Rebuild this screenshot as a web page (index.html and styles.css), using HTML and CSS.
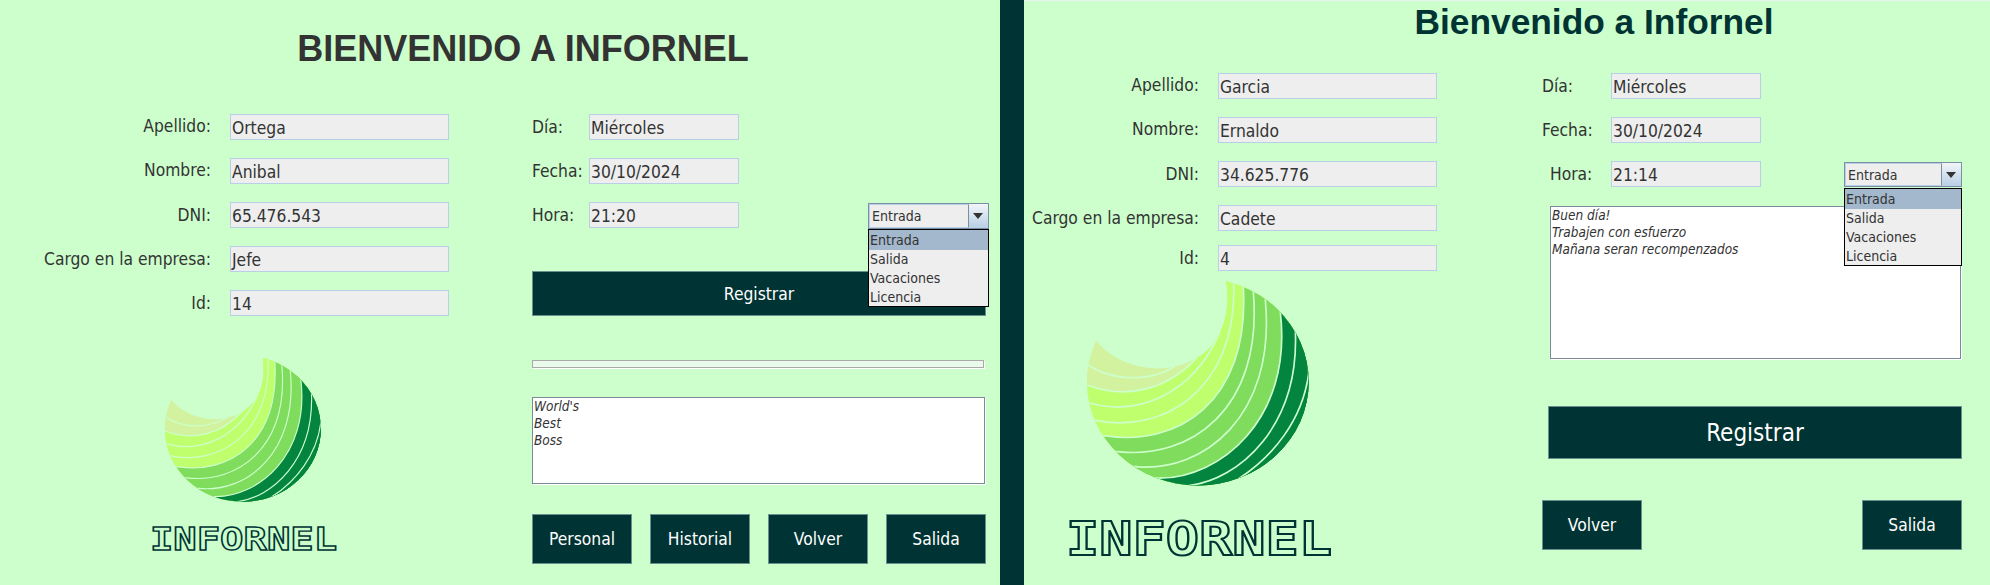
FILE: index.html
```html
<!DOCTYPE html>
<html>

<head>
    <meta charset="utf-8">
    <title>Infornel</title>
    <link rel="stylesheet" href="styles.css">
</head>

<body>
    <svg class="defs" width="0" height="0">
        <defs>
            <clipPath id="disc-edge">
                <ellipse cx="445" cy="335" rx="333" ry="312" />
            </clipPath>
            <clipPath id="disc-cut">
                <path d="M140 213 C205 290 310 305 375 290 C400 285 420 277 440 265 C495 235 550 160 530 30 L900 0 L900 700 L0 700 L0 213 Z" />
            </clipPath>
            <symbol id="disc" viewBox="100 30 700 630">
                <g clip-path="url(#disc-edge)">
                    <g clip-path="url(#disc-cut)" class="bands">
                        <path class="pale" d="M0 0 L900 0 L900 700 L0 700 Z" />
                        <path class="pale" d="M0 285 L115 285 C190 335 300 335 375 290 L375 0 L900 0 L900 700 L0 700 Z" />
                        <path class="lime" d="M0 345 L113 345 C230 390 350 360 440 265 L440 0 L900 0 L900 700 L0 700 Z" />
                        <path class="lime" d="M0 400 L123 400 C270 440 430 370 510 190 L510 0 L900 0 L900 700 L0 700 Z" />
                        <path class="lime" d="M0 452 L143 452 C330 490 560 370 553 47 L553 0 L900 0 L900 700 L0 700 Z" />
                        <path class="green" d="M0 498 L170 498 C380 530 600 400 582 57 L582 0 L900 0 L900 700 L0 700 Z" />
                        <path class="green" d="M0 545 L205 545 C420 570 640 420 612 70 L612 0 L900 0 L900 700 L0 700 Z" />
                        <path class="green" d="M0 590 L258 590 C460 610 680 440 648 93 L648 0 L900 0 L900 700 L0 700 Z" />
                        <path class="dark" d="M0 625 L330 625 C510 625 730 450 693 128 L693 0 L900 0 L900 700 L0 700 Z" />
                        <path class="dark" d="M415 700 L415 648 C570 630 750 470 738 183 L738 0 L900 0 L900 700 Z" />
                        <path class="dark" d="M570 700 L570 625 C670 560 760 450 778 310 L778 0 L900 0 L900 700 Z" />
                    </g>
                </g>
            </symbol>
        </defs>
    </svg>

    <div class="screen">
        <div class="panel panel-left">
            <h1 class="title">BIENVENIDO A INFORNEL</h1>
            <div class="columns">
                <div class="col-a">
                    <div class="form">
                        <div class="row raised"><span class="label">Apellido:</span><div class="field">Ortega</div></div>
                        <div class="row raised"><span class="label">Nombre:</span><div class="field">Anibal</div></div>
                        <div class="row"><span class="label">DNI:</span><div class="field">65.476.543</div></div>
                        <div class="row"><span class="label">Cargo en la empresa:</span><div class="field">Jefe</div></div>
                        <div class="row"><span class="label">Id:</span><div class="field">14</div></div>
                    </div>
                    <svg class="disc"><use href="#disc" /></svg>
                    <svg class="wordmark" viewBox="0 0 260 34"><text x="-3" y="34" textLength="266" lengthAdjust="spacingAndGlyphs">INFORNEL</text></svg>
                </div>
                <div class="col-b">
                    <div class="date-rows">
                        <div class="date-row"><span class="date-label">Día:</span><div class="field">Miércoles</div></div>
                        <div class="date-row"><span class="date-label">Fecha:</span><div class="field">30/10/2024</div></div>
                        <div class="date-row">
                            <span class="date-label">Hora:</span><div class="field">21:20</div>
                            <div class="combo">
                                <div class="combo-value">Entrada</div>
                                <div class="combo-arrow"></div>
                                <div class="combo-list">
                                    <div class="combo-item selected">Entrada</div>
                                    <div class="combo-item">Salida</div>
                                    <div class="combo-item">Vacaciones</div>
                                    <div class="combo-item">Licencia</div>
                                </div>
                            </div>
                        </div>
                    </div>
                    <div class="btn register">Registrar</div>
                    <div class="progress"></div>
                    <div class="notes">World's<br>Best<br>Boss</div>
                    <div class="actions">
                        <div class="btn small">Personal</div>
                        <div class="btn small">Historial</div>
                        <div class="btn small">Volver</div>
                        <div class="btn small">Salida</div>
                    </div>
                </div>
            </div>
        </div>

        <div class="divider"></div>

        <div class="panel panel-right">
            <h1 class="title">Bienvenido a Infornel</h1>
            <div class="columns">
                <div class="col-a">
                    <div class="form">
                        <div class="row raised"><span class="label">Apellido:</span><div class="field">Garcia</div></div>
                        <div class="row raised"><span class="label">Nombre:</span><div class="field">Ernaldo</div></div>
                        <div class="row"><span class="label">DNI:</span><div class="field">34.625.776</div></div>
                        <div class="row"><span class="label">Cargo en la empresa:</span><div class="field">Cadete</div></div>
                        <div class="row close"><span class="label">Id:</span><div class="field">4</div></div>
                    </div>
                    <svg class="disc"><use href="#disc" /></svg>
                    <svg class="wordmark" viewBox="0 0 260 34"><text x="-3" y="34" textLength="266" lengthAdjust="spacingAndGlyphs">INFORNEL</text></svg>
                </div>
                <div class="col-b">
                    <div class="date-rows">
                        <div class="date-row"><span class="date-label">Día:</span><div class="field">Miércoles</div></div>
                        <div class="date-row"><span class="date-label">Fecha:</span><div class="field">30/10/2024</div></div>
                        <div class="date-row">
                            <span class="date-label indented">Hora:</span><div class="field">21:14</div>
                            <div class="combo">
                                <div class="combo-value">Entrada</div>
                                <div class="combo-arrow"></div>
                                <div class="combo-list">
                                    <div class="combo-item selected">Entrada</div>
                                    <div class="combo-item">Salida</div>
                                    <div class="combo-item">Vacaciones</div>
                                    <div class="combo-item">Licencia</div>
                                </div>
                            </div>
                        </div>
                    </div>
                    <div class="notes">Buen día!<br>Trabajen con esfuerzo<br>Mañana seran recompenzados</div>
                    <div class="btn register">Registrar</div>
                    <div class="actions">
                        <div class="btn small">Volver</div>
                        <div class="btn small">Salida</div>
                    </div>
                </div>
            </div>
        </div>
    </div>
</body>

</html>
```

FILE: styles.css
```css
* {
    margin: 0;
    padding: 0;
    box-sizing: border-box;
}

body {
    width: 1990px;
    height: 585px;
    overflow: hidden;
    background-color: #ccffcc;
    color: #333333;
    font-family: "DejaVu Sans Condensed", "DejaVu Sans", "Noto Sans", sans-serif;
    font-size: 17.3px;
}

.defs {
    position: absolute;
}

.screen {
    display: flex;
    height: 585px;
}

.panel {
    height: 585px;
}

.panel-left {
    width: 1000px;
    padding-top: 29px;
}

.divider {
    width: 24px;
    background-color: #003333;
}

.panel-right {
    width: 966px;
    border-top: 1px solid #e8f4ee;
    padding-top: 1px;
}

.title {
    height: 40px;
    line-height: 40px;
    font-family: "Liberation Sans", Arial, sans-serif;
    font-size: 36px;
    font-weight: bold;
    text-align: center;
}

.panel-left .title {
    padding-left: 46px;
    margin-bottom: 45px;
}

.panel-right .title {
    padding-left: 174px;
    margin-bottom: 31px;
    font-size: 35.3px;
    color: #003333;
}

.columns {
    display: flex;
}

.panel-left .col-a {
    width: 532px;
}

.panel-right .col-a {
    width: 518px;
}

/* personal data */
.form {
    display: flex;
    flex-direction: column;
    gap: 18px;
}

.row {
    display: flex;
    align-items: center;
    gap: 19px;
}

.row.close {
    margin-top: -4px;
}

.label {
    text-align: right;
}

.row.raised .label {
    margin-bottom: 2px;
}

.panel-left .label {
    width: 211px;
}

.panel-right .label {
    width: 175px;
}

.field {
    height: 26px;
    line-height: 26px;
    padding-left: 1px;
    background-color: #eeeeee;
    border: 1px solid #b8cfe5;
    white-space: nowrap;
}

.row .field {
    width: 219px;
}

.date-row .field {
    width: 150px;
}

/* logo */
.disc {
    display: block;
}

.panel-left .disc {
    width: 164px;
    height: 148px;
    margin: 41px 0 0 162px;
}

.panel-right .disc {
    width: 233px;
    height: 210px;
    margin: 9px 0 0 59px;
}

.bands path {
    stroke: #ccffcc;
    stroke-width: 5;
}

.bands .pale {
    fill: #d2f29f;
}

.bands .lime {
    fill: #bfff6e;
}

.bands .green {
    fill: #7fdc5c;
}

.bands .dark {
    fill: #038540;
}

.wordmark {
    display: block;
    overflow: visible;
}

.wordmark text {
    font-family: "DejaVu Sans Mono", monospace;
    font-weight: bold;
    font-size: 46.6px;
    fill: none;
    stroke: #003333;
    stroke-width: 2;
}

.panel-left .wordmark {
    width: 183px;
    height: 24px;
    margin: 21px 0 0 152px;
}

.panel-right .wordmark {
    width: 260px;
    height: 34px;
    margin: 31px 0 0 45px;
}

/* right hand column */
.date-rows {
    display: flex;
    flex-direction: column;
    gap: 18px;
}

.date-row {
    display: flex;
    align-items: center;
    height: 26px;
}

.panel-left .date-label {
    width: 57px;
}

.panel-right .date-label {
    width: 69px;
}

.date-label.indented {
    padding-left: 8px;
}

.combo {
    position: relative;
    display: flex;
    height: 26px;
    margin: 2px 0 0 auto;
    border: 1px solid #7a8fa5;
    font-size: 14px;
}

.panel-left .combo {
    width: 121px;
}

.panel-left .date-rows {
    width: 457px;
}

.panel-right .combo {
    width: 118px;
    height: 25px;
    margin-top: 1px;
}

.combo-value {
    flex: 1;
    padding-left: 2px;
    line-height: 22px;
    background-color: #eeeeee;
    border: 1px solid #b8cfe5;
    border-right: 1px solid #7a8fa5;
}

.combo-arrow {
    position: relative;
    width: 19px;
    background: linear-gradient(#f2f5f9, #b8cfe5);
}

.combo-arrow::after {
    content: "";
    position: absolute;
    left: 4px;
    top: 9px;
    border-left: 5px solid transparent;
    border-right: 5px solid transparent;
    border-top: 6px solid #333333;
}

.combo-list {
    position: absolute;
    top: 25px;
    left: -1px;
    right: -1px;
    height: 78px;
    background-color: #eeeeee;
    border: 1px solid #000000;
}

.combo-item {
    height: 19px;
    line-height: 19px;
    padding-left: 1px;
}

.combo-item:first-child {
    height: 20px;
    line-height: 20px;
}

.combo-item.selected {
    background-color: #a3b8cc;
}

.btn {
    display: flex;
    align-items: center;
    justify-content: center;
    background-color: #003333;
    border: 1px solid #6b8e8e;
    color: #ffffff;
}

.register {
    width: 454px;
    height: 45px;
    margin-top: 43px;
}

.panel-right .register {
    width: 414px;
    height: 53px;
    margin: 47px 0 0 6px;
    font-size: 24px;
}

.progress {
    width: 452px;
    height: 8px;
    margin-top: 44px;
    background-color: #ebfbeb;
    border: 1px solid #aaaaaa;
    box-shadow: 1px 1px 0 #ffffff;
}

.notes {
    width: 453px;
    height: 87px;
    margin-top: 29px;
    padding: 0 1px;
    background-color: #ffffff;
    border: 1px solid #7a8a99;
    box-shadow: 1px 1px 0 #ffffff;
    font-size: 13.5px;
    font-style: italic;
    line-height: 17px;
}

.panel-right .notes {
    width: 411px;
    height: 153px;
    margin: 19px 0 0 8px;
}

.actions {
    display: flex;
    justify-content: space-between;
    margin-top: 30px;
    width: 454px;
}

.panel-right .actions {
    width: 420px;
    margin-top: 41px;
}

.small {
    width: 100px;
    height: 50px;
}
```
